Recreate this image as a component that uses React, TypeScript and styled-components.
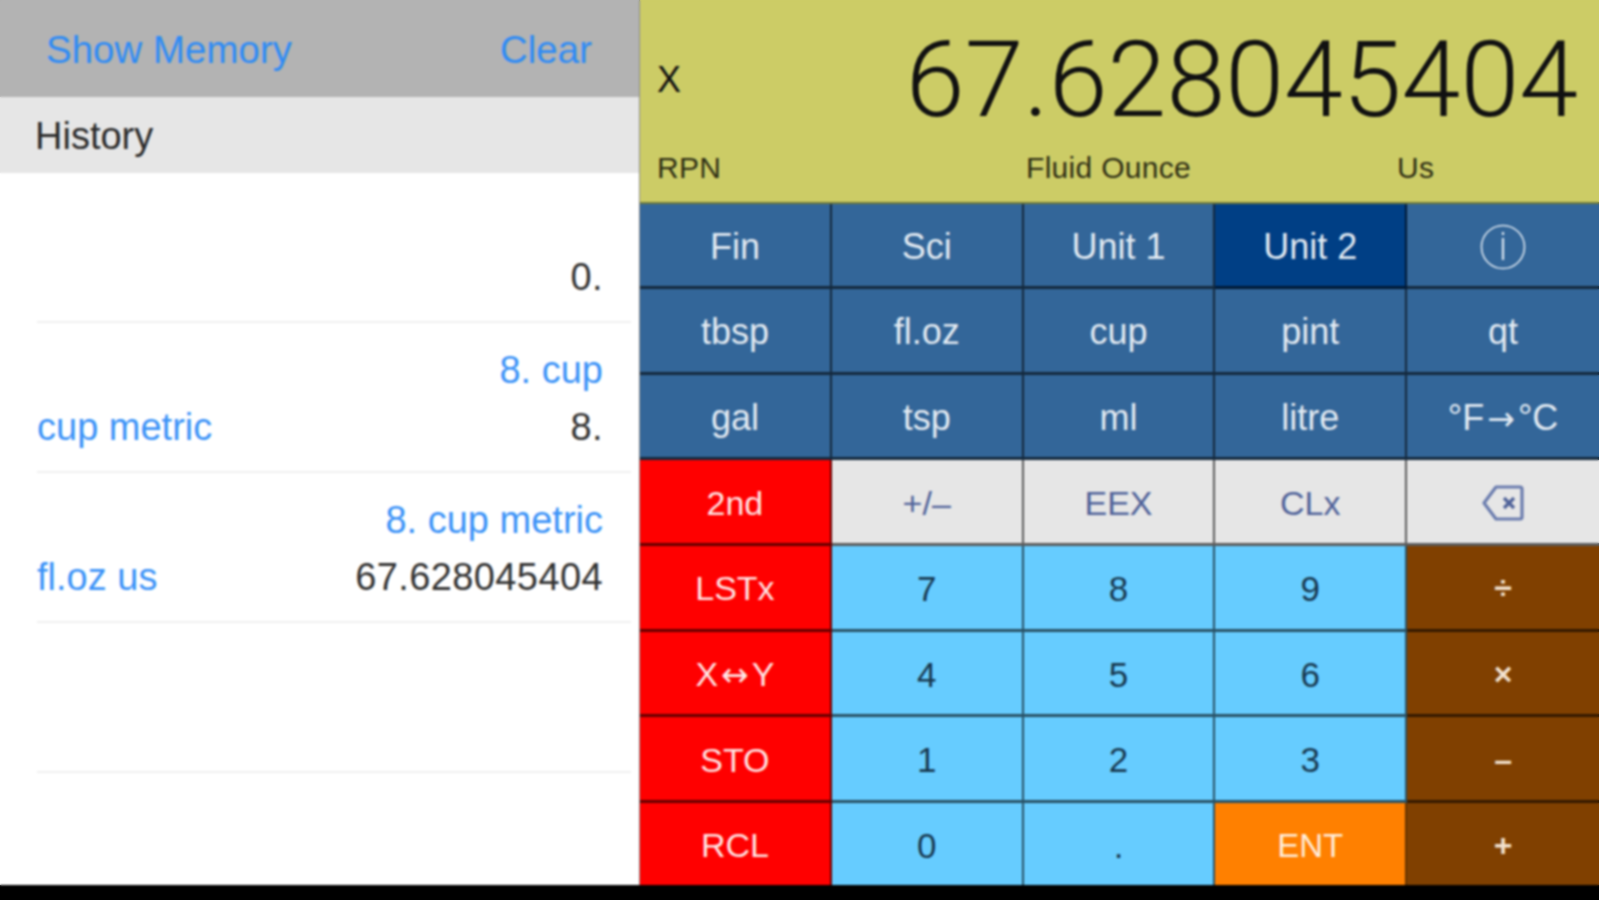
import { createGlobalStyle, styled } from "styled-components";

const GlobalStyle = createGlobalStyle`
  html, body {
    margin: 0;
    padding: 0;
    background: #000;
    font-family: "Liberation Sans", Arial, sans-serif;
  }
`;

type Tone = "blue" | "active" | "gray" | "red" | "sky" | "brown" | "orange";

const toneColors: Record<Tone, { bg: string; fg: string; size: number; weight: number }> = {
  blue: { bg: "#336699", fg: "#e2eaf2", size: 36, weight: 400 },
  active: { bg: "#003f85", fg: "#e2eaf2", size: 36, weight: 400 },
  gray: { bg: "#e6e6e6", fg: "#4f6299", size: 34, weight: 400 },
  red: { bg: "#ff0000", fg: "#ffe6e6", size: 34, weight: 400 },
  sky: { bg: "#66ccff", fg: "#17384f", size: 35, weight: 400 },
  brown: { bg: "#804000", fg: "#f3e2cf", size: 32, weight: 700 },
  orange: { bg: "#ff8000", fg: "#ffeedd", size: 33, weight: 400 },
};

const Screen = styled.div`
  display: flex;
  height: 885px;
  width: 1599px;
  overflow: hidden;
  background: #fff;
`;

// the reference is an upscaled capture, this softens everything under it
const SoftFocus = styled.div`
  position: fixed;
  inset: 0;
  pointer-events: none;
  backdrop-filter: blur(1px);
`;

const HistoryPanel = styled.section`
  width: 639px;
  flex-shrink: 0;
  display: flex;
  flex-direction: column;
  background: #fff;
  border-right: 1px solid #8c8c8c;
`;

const TopBar = styled.header`
  height: 97px;
  flex-shrink: 0;
  box-sizing: border-box;
  padding: 2px 47px 0 46px;
  display: flex;
  align-items: center;
  justify-content: space-between;
  background: #b3b3b3;
`;

const LinkButton = styled.span`
  font-size: 38.5px;
  color: #2f8bf5;
`;

const SectionTitle = styled.div`
  height: 76px;
  flex-shrink: 0;
  box-sizing: border-box;
  padding: 2px 0 0 35px;
  display: flex;
  align-items: center;
  background: #e6e6e6;
  color: #2b2b2b;
  font-size: 38px;
`;

const HistoryRow = styled.div`
  margin: 0 8px 0 37px;
  padding: 19px 28px 0 0;
  box-sizing: border-box;
  height: 150px;
  border-bottom: 2px solid #f0f0f0;
  display: grid;
  grid-template-rows: 57px 57px;
`;

const Expression = styled.div`
  text-align: right;
  font-size: 38px;
  line-height: 57px;
  color: #3b92f7;
`;

const ResultLine = styled.div`
  display: flex;
  justify-content: space-between;
  font-size: 38px;
  line-height: 57px;
`;

const UnitName = styled.span`
  color: #3b92f7;
`;

const Value = styled.span`
  color: #333;
  letter-spacing: 0.4px;
`;

const Calculator = styled.section`
  flex: 1;
  display: flex;
  flex-direction: column;
  min-width: 0;
`;

const Display = styled.div`
  height: 204px;
  flex-shrink: 0;
  box-sizing: border-box;
  padding: 0 21px 0 17px;
  background: #cccc66;
  border-bottom: 2px solid #6f7a3c;
  color: #111;
`;

const DisplayMain = styled.div`
  height: 156px;
  box-sizing: border-box;
  padding-top: 3px;
  display: flex;
  align-items: center;
  justify-content: space-between;
`;

const RegisterName = styled.span`
  font-size: 36px;
`;

const DisplayValue = styled.span`
  font-family: Roboto, "Liberation Sans", sans-serif;
  font-weight: 300;
  font-size: 106px;
  line-height: 1;
`;

const StatusLine = styled.div`
  display: grid;
  grid-template-columns: 369px 371px 1fr;
  font-size: 30px;
  line-height: 24px;
  letter-spacing: 0.3px;
  color: #2e2e14;
`;

const Keypad = styled.div`
  flex: 1;
  display: grid;
  grid-template-columns: repeat(5, 1fr);
  grid-template-rows: 85px repeat(6, 85.7px) 1fr;
`;

const Key = styled.button<{ $tone: Tone; $lastRow: boolean; $lastCol: boolean }>`
  margin: 0;
  padding: 3px 0 0;
  display: flex;
  align-items: center;
  justify-content: center;
  border: 0;
  border-right: ${(p) => (p.$lastCol ? "0" : "2px solid rgba(0, 0, 0, 0.6)")};
  border-bottom: ${(p) => (p.$lastRow ? "0" : "3px solid rgba(0, 0, 0, 0.6)")};
  background: ${(p) => toneColors[p.$tone].bg};
  color: ${(p) => toneColors[p.$tone].fg};
  font-family: inherit;
  font-size: ${(p) => toneColors[p.$tone].size}px;
  font-weight: ${(p) => toneColors[p.$tone].weight};
`;

const Arrow = styled.span`
  font-family: "DejaVu Sans", sans-serif;
  font-size: 33px;
  line-height: 1;
  margin: 0 3px;
`;

const InfoIcon = () => (
  <svg width="46" height="48" viewBox="0 0 46 48" fill="none" stroke="#dce6f0" strokeWidth="1.6">
    <circle cx="23" cy="24" r="21.5" />
    <path d="M23 15v22" strokeWidth="2.2" />
    <path d="M23 9v3" strokeWidth="2.2" />
  </svg>
);

const BackspaceIcon = () => (
  <svg width="44" height="38" viewBox="0 0 44 38" fill="none" stroke="#6a7cae" strokeWidth="3.2" strokeLinejoin="round">
    <path d="M15 3h24a2 2 0 0 1 2 2v28a2 2 0 0 1-2 2H15L3 19z" />
    <path d="M23 14l10 10M33 14L23 24" stroke="#4f6299" />
  </svg>
);

interface KeyDef {
  label: React.ReactNode;
  tone: Tone;
}

const k = (label: React.ReactNode, tone: Tone): KeyDef => ({ label, tone });

const keys: KeyDef[] = [
  k("Fin", "blue"), k("Sci", "blue"), k("Unit 1", "blue"), k("Unit 2", "active"), k(<InfoIcon />, "blue"),
  k("tbsp", "blue"), k("fl.oz", "blue"), k("cup", "blue"), k("pint", "blue"), k("qt", "blue"),
  k("gal", "blue"), k("tsp", "blue"), k("ml", "blue"), k("litre", "blue"), k(<span>°F<Arrow>→</Arrow>°C</span>, "blue"),
  k("2nd", "red"), k("+/–", "gray"), k("EEX", "gray"), k("CLx", "gray"), k(<BackspaceIcon />, "gray"),
  k("LSTx", "red"), k("7", "sky"), k("8", "sky"), k("9", "sky"), k("÷", "brown"),
  k(<span>X<Arrow>↔</Arrow>Y</span>, "red"), k("4", "sky"), k("5", "sky"), k("6", "sky"), k("×", "brown"),
  k("STO", "red"), k("1", "sky"), k("2", "sky"), k("3", "sky"), k("–", "brown"),
  k("RCL", "red"), k("0", "sky"), k(".", "sky"), k("ENT", "orange"), k("+", "brown"),
];

const history = [
  { expression: "", unit: "", value: "0." },
  { expression: "8. cup", unit: "cup metric", value: "8." },
  { expression: "8. cup metric", unit: "fl.oz us", value: "67.628045404" },
  { expression: "", unit: "", value: "" },
];

export default function App() {
  return (
    <>
      <GlobalStyle />
      <Screen>
        <HistoryPanel>
          <TopBar>
            <LinkButton>Show Memory</LinkButton>
            <LinkButton>Clear</LinkButton>
          </TopBar>
          <SectionTitle>History</SectionTitle>
          {history.map((row, i) => (
            <HistoryRow key={i}>
              <Expression>{row.expression}</Expression>
              <ResultLine>
                <UnitName>{row.unit}</UnitName>
                <Value>{row.value}</Value>
              </ResultLine>
            </HistoryRow>
          ))}
        </HistoryPanel>
        <Calculator>
          <Display>
            <DisplayMain>
              <RegisterName>X</RegisterName>
              <DisplayValue>67.628045404</DisplayValue>
            </DisplayMain>
            <StatusLine>
              <span>RPN</span>
              <span>Fluid Ounce</span>
              <span>Us</span>
            </StatusLine>
          </Display>
          <Keypad>
            {keys.map((key, i) => (
              <Key key={i} $tone={key.tone} $lastRow={i >= 35} $lastCol={i % 5 === 4}>
                {key.label}
              </Key>
            ))}
          </Keypad>
        </Calculator>
      </Screen>
      <SoftFocus />
    </>
  );
}
